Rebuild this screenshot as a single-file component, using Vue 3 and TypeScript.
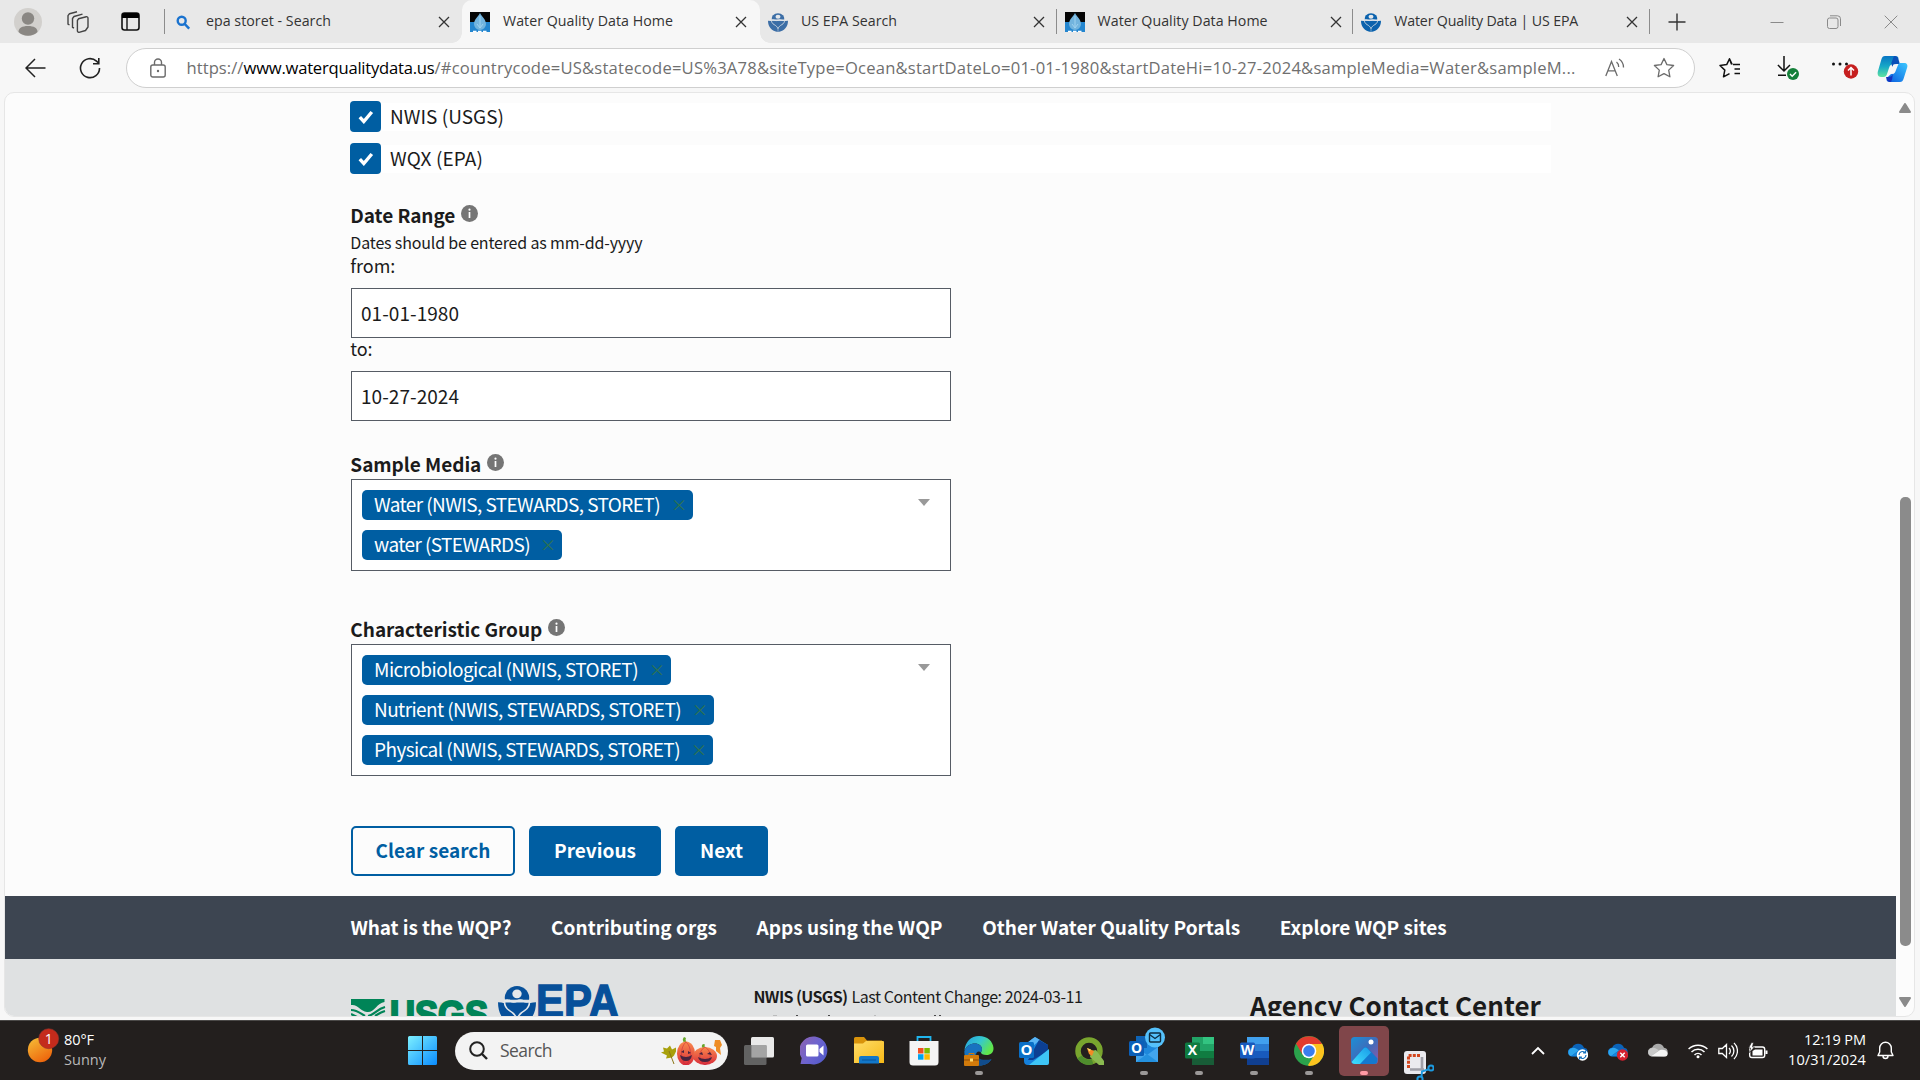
<script setup lang="ts">
interface Tab {
  title: string
  icon: 'search' | 'drop' | 'epa'
  width: number
  active?: boolean
  divider?: boolean
  muted?: boolean
}

interface Chip {
  label: string
  width: number
  total: number
}

const tabs: Tab[] = [
  { title: 'epa storet - Search', icon: 'search', width: 125 },
  { title: 'Water Quality Data Home', icon: 'drop', width: 170, active: true },
  { title: 'US EPA Search', icon: 'epa', width: 96, divider: true, muted: true },
  { title: 'Water Quality Data Home', icon: 'drop', width: 170, divider: true },
  { title: 'Water Quality Data | US EPA', icon: 'epa', width: 184, divider: true },
]

const sources = [
  { label: 'NWIS (USGS)', width: 114 },
  { label: 'WQX (EPA)', width: 93 },
]

const media: Chip[] = [
  { label: 'Water (NWIS, STEWARDS, STORET)', width: 286, total: 331 },
  { label: 'water (STEWARDS)', width: 156, total: 200 },
]

const groups: Chip[] = [
  { label: 'Microbiological (NWIS, STORET)', width: 264, total: 309 },
  { label: 'Nutrient (NWIS, STEWARDS, STORET)', width: 307, total: 352 },
  { label: 'Physical (NWIS, STEWARDS, STORET)', width: 306, total: 351 },
]

const links = [
  { label: 'What is the WQP?', width: 161 },
  { label: 'Contributing orgs', width: 166 },
  { label: 'Apps using the WQP', width: 186 },
  { label: 'Other Water Quality Portals', width: 258 },
  { label: 'Explore WQP sites', width: 167 },
]

// Tracks a label out (or in) so that it fills the given width.
const vFit = {
  mounted(el: HTMLElement, binding: { value: number }) {
    const count = (el.textContent ?? '').trim().length
    const natural = el.getBoundingClientRect().width
    if (count > 0) el.style.letterSpacing = `${((binding.value - natural) / count).toFixed(3)}px`
  },
}
</script>

<template>
  <div class="screen">
    <svg class="defs" width="0" height="0" aria-hidden="true">
      <defs>
        <symbol id="epa" viewBox="0 0 38 46">
          <path d="M0 20c8 0 14 4 19 12 5-8 11-12 19-12 0 14-7 24-19 26C7 44 0 34 0 20z" />
          <path d="M6.500 19.500h25c0 4-2 7.500-5 9.500-3.500 2-6 5-7.500 9-1.500-4-4-7-7.500-9-3-2-5-5.500-5-9.500z" stroke="#e4e7ea" stroke-width="1.600" />
          <path d="M7 17.500a12.200 12.500 0 1 1 24 0z" />
          <circle cx="19" cy="11" r="4.700" fill="#e4e7ea" />
          <path d="M6 18.800q3.200-2 6.500 0t6.500 0 6.500 0 6.500 0" fill="none" stroke="#e4e7ea" stroke-width="1.800" />
          <path d="M19 36v10" stroke="#e4e7ea" stroke-width="1" />
        </symbol>
        <symbol id="star" viewBox="0 0 22 22">
          <path d="M11 1.500l2.900 6.100 6.700.9-4.900 4.600 1.200 6.700-5.900-3.200-5.900 3.200 1.200-6.700L1.400 8.500l6.700-.9z" fill="none" stroke="currentColor" stroke-width="1.300" stroke-linejoin="round" />
        </symbol>
        <symbol id="info" viewBox="0 0 17 17">
          <circle cx="8.500" cy="8.500" r="8.500" fill="#757575" />
          <circle cx="8.500" cy="4.700" r="1.100" fill="#fff" />
          <path d="M8.500 7v6" stroke="#fff" stroke-width="1.700" />
        </symbol>
        <linearGradient id="gSun" x1="0" y1="0" x2=".6" y2="1"><stop offset="0" stop-color="#f6c038" /><stop offset="1" stop-color="#ee670d" /></linearGradient>
        <linearGradient id="gWin" x1="0" y1="0" x2="1" y2="1"><stop offset="0" stop-color="#7df0ff" /><stop offset="1" stop-color="#0a8cff" /></linearGradient>
        <linearGradient id="gChat" x1="0" y1=".2" x2="1" y2=".8"><stop offset="0" stop-color="#8a62b4" /><stop offset=".5" stop-color="#6c63cf" /><stop offset="1" stop-color="#5159c9" /></linearGradient>
        <linearGradient id="gFold" x1="0" y1="0" x2="1" y2="1"><stop offset="0" stop-color="#ffdc68" /><stop offset="1" stop-color="#f7b917" /></linearGradient>
        <linearGradient id="gEdge" x1="0" y1="0" x2="1" y2=".5"><stop offset="0" stop-color="#259fe0" /><stop offset=".55" stop-color="#35c8cf" /><stop offset="1" stop-color="#61e64a" /></linearGradient>
        <linearGradient id="gPhoto" x1="0" y1="0" x2="1" y2="1"><stop offset="0" stop-color="#1c8fd6" /><stop offset=".5" stop-color="#3d6dbb" /><stop offset="1" stop-color="#9257a6" /></linearGradient>
        <linearGradient id="gHill" x1="0" y1="1" x2="1" y2="0"><stop offset="0" stop-color="#3fe0fd" /><stop offset="1" stop-color="#199ae8" /></linearGradient>
        <linearGradient id="gCop1" x1="0" y1="0" x2="0" y2="1"><stop offset="0" stop-color="#0875c4" /><stop offset=".5" stop-color="#17a9c7" /><stop offset="1" stop-color="#5fe2a0" /></linearGradient>
        <linearGradient id="gCop2" x1="1" y1="0" x2="0" y2="1"><stop offset="0" stop-color="#3cc8ff" /><stop offset="1" stop-color="#0759dd" /></linearGradient>
        <linearGradient id="gPump" x1="0" y1="0" x2="0" y2="1"><stop offset="0" stop-color="#f98a4c" /><stop offset="1" stop-color="#d92d3b" /></linearGradient>
      </defs>
    </svg>

    <header class="tabstrip">
      <div class="corner">
        <svg width="28" height="28" viewBox="0 0 28 28">
          <circle cx="14" cy="14" r="14" fill="#d2d0cd" />
          <circle cx="14" cy="10.500" r="6.200" fill="#8a8783" />
          <path d="M4.500 24c0-4 3.500-6 9.500-6s9.500 2 9.500 6a14 14 0 0 1-19 0z" fill="#8a8783" />
        </svg>
        <svg class="workspaces" width="22" height="22" viewBox="0 0 22 22" fill="none" stroke="#444" stroke-width="1.400" stroke-linejoin="round">
          <path d="M11.500 7.800l7.800-2.100a1.400 1.400 0 0 1 1.700 1.300v9l-2.500 3.500-6.500 1.800a1.400 1.400 0 0 1-1.600-1.300V9.500z" />
          <path d="M7 17l-1.500-.7V7.500l1.500-2 8.500-2.400" />
          <path d="M2.500 14L1 13.200V4.700l1.500-2L10 .8" />
        </svg>
        <svg class="actions" width="19" height="19" viewBox="0 0 19 19">
          <rect x="1" y="1" width="17" height="17" rx="2.500" fill="none" stroke="#111" stroke-width="1.600" />
          <path d="M1 3.500A2.500 2.500 0 0 1 3.500 1h12A2.500 2.500 0 0 1 18 3.500V6H1z" fill="#000" />
          <path d="M6 6v12" stroke="#111" stroke-width="1.400" />
        </svg>
      </div>
      <div v-for="(tab, i) in tabs" :key="i" class="tab" :class="{ active: tab.active, divided: tab.divider }">
        <span class="favicon">
          <svg v-if="tab.icon === 'search'" width="20" height="20" viewBox="0 0 20 20" fill="none" stroke="#1a73cf" stroke-width="2.400">
            <circle cx="8.700" cy="8.800" r="4" /><path d="M11.600 11.900l4.600 4.800" />
          </svg>
          <svg v-else-if="tab.icon === 'drop'" width="20" height="20" viewBox="0 0 20 20">
            <rect width="20" height="20" fill="#050505" /><rect y="10" width="20" height="10" fill="#2486cf" />
            <path d="M10 1c2 4 6 6.500 6 11a6 6 0 0 1-12 0C4 7.500 8 5 10 1z" fill="#72b4de" />
            <path d="M10 4v12M7 12l3 4 3-4" stroke="#9fd2ef" fill="none" />
            <path d="M3 19.500h3.500M8 19.500h3.500M13 19.500h3.500" stroke="#fff" stroke-width="1.500" />
          </svg>
          <svg v-else width="20" height="20" viewBox="0 0 38 46" preserveAspectRatio="none" :fill="tab.muted ? '#3c6ea6' : '#0b62ad'"><use href="#epa" width="38" height="46" /></svg>
        </span>
        <span class="title"><span v-fit="tab.width">{{ tab.title }}</span></span>
        <svg class="close" width="12" height="12" viewBox="0 0 12 12" stroke="#333" stroke-width="1.300"><path d="M1 1l10 10M11 1L1 11" /></svg>
      </div>
      <svg class="newtab" width="18" height="18" viewBox="0 0 18 18" stroke="#333" stroke-width="1.400"><path d="M9 .5v17M.5 9h17" /></svg>
      <div class="window-controls">
        <svg width="14" height="14" viewBox="0 0 14 14"><path d="M.5 7.500h13" stroke="#8a8a8a" /></svg>
        <svg width="14" height="14" viewBox="0 0 14 14" fill="none" stroke="#8a8a8a"><rect x=".5" y="3" width="10.500" height="10.500" rx="2" /><path d="M3 .8h7.500a3 3 0 0 1 3 3V11" /></svg>
        <svg width="14" height="14" viewBox="0 0 14 14" stroke="#8a8a8a"><path d="M.7.700l12.600 12.600M13.300.7L.7 13.300" /></svg>
      </div>
    </header>

    <div class="toolbar">
      <svg class="back" width="21" height="20" viewBox="0 0 21 20" fill="none" stroke="#222" stroke-width="1.500"><path d="M20.500 10H1.200M10 1L1 10l9 9" /></svg>
      <svg class="reload" width="22" height="22" viewBox="0 0 22 22" fill="none" stroke="#222" stroke-width="1.600"><path d="M20.500 11A9.500 9.500 0 1 1 17.500 4.200L19.500 6M19.800 1v5.800H14" /></svg>
      <div class="omnibox">
        <svg width="16" height="20" viewBox="0 0 16 20" fill="none" stroke="#6b6b6b" stroke-width="1.400"><rect x=".8" y="7" width="14.400" height="12" rx="2" /><path d="M4.500 7V4.500a3.500 3.500 0 0 1 7 0V7" /><circle cx="8" cy="13" r="1.200" fill="#6b6b6b" stroke="none" /></svg>
        <div class="url"><span v-fit="57">https://</span><b v-fit="191">www.waterqualitydata.us</b><span v-fit="1141">/#countrycode=US&amp;statecode=US%3A78&amp;siteType=Ocean&amp;startDateLo=01-01-1980&amp;startDateHi=10-27-2024&amp;sampleMedia=Water&amp;sampleM...</span></div>
        <svg class="aloud" width="20" height="20" viewBox="0 0 20 20" fill="none" stroke="#6b6b6b" stroke-width="1.300"><path d="M.8 18L6.500 3.500 12.300 18M3 12.800h7.200M11.500 4a6 6 0 0 1 2.200 5M14 1a10 10 0 0 1 4.500 8.500" /></svg>
        <svg class="star" width="22" height="22"><use href="#star" /></svg>
      </div>
      <svg class="favs" width="22" height="22" viewBox="0 0 22 22" fill="none" stroke="#111" stroke-width="1.500" stroke-linejoin="round"><path d="M14 7.500h7M15.500 12h5.500M15.500 16.500H21" /><path d="M12.500 7.300L10.500 1.800 7.700 7.600 1 8.500l4.800 4.600L4.500 19.800l6-3.200M10.500 1.800l2.700 5.700" /></svg>
      <svg class="download" width="22" height="26" viewBox="0 0 22 26"><path d="M7 1v15M.9 10L7 16l6-6M1 20.300h8" fill="none" stroke="#111" stroke-width="1.500" /><circle cx="16" cy="19" r="6" fill="#15803a" /><path d="M13 19l2.200 2.200 3.900-4" fill="none" stroke="#fff" stroke-width="1.400" /></svg>
      <svg class="more" width="28" height="26" viewBox="0 0 28 26"><g fill="#111"><circle cx="2.500" cy="9" r="1.500" /><circle cx="9" cy="9" r="1.500" /><circle cx="15.500" cy="9" r="1.500" /></g><circle cx="20" cy="16.500" r="7.200" fill="#c61f1f" /><path d="M20 20.500V13M17 15.500l3-3 3 3" fill="none" stroke="#fff" stroke-width="1.500" /></svg>
      <svg class="copilot" width="31" height="28" viewBox="0 0 31 28">
        <path d="M8 1h10c3 0 4 1.500 3.200 4L17 9c-3 0-4 1-5 4l-2 6c-.6 2-1.500 3-3.500 3H4C1 22 0 19 1 16L4.500 4C5.200 2 6 1 8 1z" fill="url(#gCop1)" />
        <path d="M17 1c3 0 4 1.500 5 5l.8 3h-3C17 9 16 10 15.200 12l-.9-4z" fill="#0b50b8" />
        <path d="M23 27H13c-3 0-4-1.500-3.200-4L14 19c3 0 4-1 5-4l2-5c.6-1.500 1.500-2 3.500-2H27c3 0 4 2 3 5l-3.500 11c-.7 2-1.500 3-3.500 3z" fill="url(#gCop2)" />
        <path d="M14 27c-3 0-4-1.500-5-5h2.500c2.500 0 3.500-1 4.300-3l-.6 5z" fill="#1632bd" />
        <path d="M16.500 9.500h3.800l-3.500 9h-4z" fill="#f7f7f7" />
      </svg>
    </div>

    <div class="panel">
      <div class="page">
        <form class="form">
          <div v-for="source in sources" :key="source.label" class="check">
            <span class="box"><svg width="16" height="14" viewBox="0 0 16 14"><path d="M1.800 7.200l4 4.300 8-9.500" fill="none" stroke="#fff" stroke-width="3.400" /></svg></span>
            <label><span v-fit="source.width">{{ source.label }}</span></label>
          </div>

          <div class="heading date"><span v-fit="105">Date Range</span><svg width="17" height="17"><use href="#info" /></svg></div>
          <div class="hint"><span v-fit="292">Dates should be entered as mm-dd-yyyy</span></div>
          <div class="minor first"><span v-fit="45">from:</span></div>
          <div class="input"><span v-fit="98">01-01-1980</span></div>
          <div class="minor"><span v-fit="22">to:</span></div>
          <div class="input"><span v-fit="98">10-27-2024</span></div>

          <div class="heading media"><span v-fit="131">Sample Media</span><svg width="17" height="17"><use href="#info" /></svg></div>
          <div class="select">
            <div class="chips">
              <div v-for="chip in media" :key="chip.label" class="chip" :style="{ width: chip.total + 'px' }">
                <span v-fit="chip.width">{{ chip.label }}</span><i>×</i>
              </div>
            </div>
            <b class="caret" />
          </div>

          <div class="heading group"><span v-fit="192">Characteristic Group</span><svg width="17" height="17"><use href="#info" /></svg></div>
          <div class="select">
            <div class="chips">
              <div v-for="chip in groups" :key="chip.label" class="chip" :style="{ width: chip.total + 'px' }">
                <span v-fit="chip.width">{{ chip.label }}</span><i>×</i>
              </div>
            </div>
            <b class="caret" />
          </div>

          <div class="buttons">
            <div class="btn outline"><span v-fit="115">Clear search</span></div>
            <div class="btn prev"><span v-fit="82">Previous</span></div>
            <div class="btn next"><span v-fit="43">Next</span></div>
          </div>
        </form>

        <nav class="links"><a v-for="link in links" :key="link.label" v-fit="link.width">{{ link.label }}</a></nav>

        <footer class="footer">
          <svg class="logos" width="270" height="57" viewBox="0 0 270 57">
            <g fill="none" stroke="#008457">
              <path d="M0 40h33.500v3C26 44 23 54 16 53S7 45 0 46z" fill="#008457" stroke="none" />
              <path d="M0 51c6 0 9 3 14 6M0 55l6 3M17 57c6-1 9-7 17-9M24 57c3-2 6-4 10-5" stroke-width="2.200" />
            </g>
            <text x="39" y="69" textLength="98" lengthAdjust="spacingAndGlyphs" font-size="39" fill="#008457" stroke="#008457" stroke-width="2.200">USGS</text>
            <svg x="147" y="24.500" width="38" height="43" viewBox="0 0 38 46" preserveAspectRatio="none" fill="#07509a"><use href="#epa" width="38" height="46" /></svg>
            <text x="185" y="58" textLength="83" lengthAdjust="spacingAndGlyphs" font-size="47" fill="#07509a" stroke="#07509a" stroke-width="1.400">EPA</text>
          </svg>
          <div class="changes">
            <p><b v-fit="94">NWIS (USGS)</b><span class="rest" v-fit="231">Last Content Change: 2024-03-11</span></p>
            <svg width="200" height="1" viewBox="0 0 200 1" fill="#4a4a4c"><path d="M18 0h4v1h-4zM119 0h2v1h-2z" opacity=".25" /><path d="M41 0h2v1h-2zM73 0h2v1h-2zM179 0h2v1h-2zM184 0h2v1h-2z" /></svg>
          </div>
          <div class="contact"><span v-fit="291">Agency Contact Center</span></div>
        </footer>
      </div>
      <div class="scrollbar">
        <svg width="12" height="10" viewBox="0 0 12 10"><path d="M6 1l5 8H1z" fill="#8b8b8b" stroke="#8b8b8b" stroke-linejoin="round" stroke-width="2" /></svg>
        <div class="thumb" />
        <svg width="12" height="10" viewBox="0 0 12 10"><path d="M6 9l5-8H1z" fill="#8b8b8b" stroke="#8b8b8b" stroke-linejoin="round" stroke-width="2" /></svg>
      </div>
    </div>

    <div class="taskbar">
      <div class="weather">
        <svg width="38" height="38" viewBox="0 0 38 38">
          <circle cx="14" cy="24" r="12.200" fill="url(#gSun)" /><circle cx="22.700" cy="12.700" r="10" fill="#c42b1c" stroke="#8e342c" stroke-width=".6" />
          <text x="22.700" y="18" text-anchor="middle" class="badge">1</text>
        </svg>
        <div><span v-fit="30">80°F</span><span class="dim" v-fit="42">Sunny</span></div>
      </div>
      <svg class="start" width="29" height="29" viewBox="0 0 29 29"><path d="M1.500 0H14v14H0V1.500A1.500 1.500 0 0 1 1.500 0zM15 0h12.500A1.500 1.500 0 0 1 29 1.500V14H15zM0 15h14v14H1.500A1.500 1.500 0 0 1 0 27.500zM15 15h14v12.500a1.500 1.500 0 0 1-1.500 1.500H15z" fill="url(#gWin)" /></svg>
      <div class="search">
        <svg width="19" height="19" viewBox="0 0 19 19" fill="none" stroke="#222" stroke-width="2"><circle cx="8" cy="8" r="6.800" /><path d="M13 13l5 5" stroke-width="2.400" /></svg>
        <span v-fit="52">Search</span>
        <svg class="pumpkins" width="62" height="28" viewBox="0 0 62 28">
          <path d="M13 25.500l-2-5-6 1 1-3-6-3 3-1-1-4 4 1 3-3 2 4 4-2v4l-2 4-2 2z" fill="#a8a00c" /><path d="M8 14l5 13" stroke="#8b7718" />
          <path d="M23 6c-1-3-2-3 0-6l2 1c-1 2 0 3 1 5zM42 12c-1-2-2-3 0-5l2 .5c-1 2 0 3 1 5z" fill="#68a62a" />
          <ellipse cx="25" cy="16.500" rx="9" ry="12" fill="url(#gPump)" /><ellipse cx="44" cy="19" rx="12" ry="9" fill="url(#gPump)" />
          <path d="M25 5c-6 5-6 18 0 23M25 5c6 5 6 18 0 23M44 10c-7 4-7 14 0 18M44 10c7 4 7 14 0 18" fill="none" stroke="#c5243e" opacity=".5" />
          <path d="M20 15l3-2v3zM27 14l3 2-3 1zM19 18q6 4 12 0-1 6-6 6t-6-6zM38 17l3-2 1 3zM46 17l3-2 2 3zM37 20q7 4 14 0-1 5-7 5t-7-5z" fill="#47233e" />
          <path d="M54 3l5 0 2 5-2 3 1 7-5-4v-4l-2-1z" fill="#ee8d25" />
        </svg>
      </div>
      <div class="apps">
        <div class="app"><svg width="30" height="28" viewBox="0 0 30 28"><rect x="7" width="23" height="20.500" rx="1.500" fill="#e9e9e9" /><rect y="8" width="22.500" height="20" rx="1.500" fill="#686868" opacity=".92" /><path d="M7.500 8h15v12.500h-15z" fill="#a4a4a4" /></svg></div>
        <div class="app"><svg width="29" height="29" viewBox="0 0 29 29"><path d="M15 .5A14 14 0 1 1 10 28H.5l1.200-6A14 14 0 0 1 15 .5z" fill="url(#gChat)" /><rect x="6" y="8.500" width="12.500" height="12" rx="1.500" fill="#fff" /><path d="M19.500 13l4-3.500v10l-4-3.500z" fill="#fff" /></svg></div>
        <div class="app"><svg width="30" height="27" viewBox="0 0 30 27"><path d="M0 1.500A1.500 1.500 0 0 1 1.500 0H10l3 3.500h15V10H0z" fill="#d9930b" /><path d="M0 6.500h9L12 4h17a1 1 0 0 1 1 1v21H0z" fill="url(#gFold)" /><path d="M5 26.500V21a2 2 0 0 1 2-2h16a2 2 0 0 1 2 2v5.500z" fill="#1277c9" /><path d="M8 23h14" stroke="#07559b" /></svg></div>
        <div class="app"><svg width="30" height="30" viewBox="0 0 30 30"><path d="M8.500 6V1h13v5" fill="none" stroke="#20b5ee" stroke-width="1.800" /><path d="M.5 5h29v21a3.500 3.500 0 0 1-3.500 3.500H4A3.500 3.500 0 0 1 .5 26z" fill="#f4f4f4" /><path d="M9 12h5.500v5.500H9z" fill="#f25022" /><path d="M15.300 12h5.500v5.500h-5.500z" fill="#7fba00" /><path d="M9 18.200h5.500v5.500H9z" fill="#00a4ef" /><path d="M15.300 18.200h5.500v5.500h-5.500z" fill="#ffb900" /></svg></div>
        <div class="app running"><svg width="30" height="31" viewBox="0 0 30 31">
          <path d="M15 1C23.500 1 29 6.500 29.500 13c.3 4.500-3 7-7 7-3.500 0-5.500-1-5.500-2.500 0-1 1-1.500 1-3.500 0-3-3-5.500-7-5.500C6.500 8.500 2.500 11 .5 15.500 1 7 7 1 15 1z" fill="url(#gEdge)" />
          <path d="M.3 16.500C2 11 6 8.500 11 8.500c4 0 7 2.500 7 5.500 0 2-1 2.500-1 3.500-2-2-5-1-5 2.500 0 4 5 6.500 10 6 2.500-.2 4-1 5.500-1.800C25 28 21 30.500 15.500 30.500 7 30.500 0 25 .3 16.500z" fill="#1873c0" />
          <path d="M12 18.500c0 5 6 7.700 15.500 5.700C25 28.500 20 31 14 30.300c-4-2-5-8-2-11.800z" fill="#114c8c" />
          <rect y="20" width="15" height="11" rx="1" fill="#d17a0b" /><path d="M0 25h15" stroke="#8d4d08" /><rect x="6" y="23.500" width="3" height="3" fill="#ffdb70" /><path d="M5 20v-1.500h5V20" fill="none" stroke="#d17a0b" /></svg></div>
        <div class="app"><svg width="30" height="28" viewBox="0 0 30 28"><path d="M5 8L16 0l13 8v18a2 2 0 0 1-2 2H9a4 4 0 0 1-4-4z" fill="#1580dc" /><path d="M13 2l3-2 5 3-14 12V7z" fill="#58b4f4" /><path d="M20 3l9 5v6L14 23H9z" fill="#0c3f93" /><path d="M30 12v14a2 2 0 0 1-2 2H10z" fill="#3ec5f6" /><rect y="5" width="15" height="16" rx="1.500" fill="#0a6fc7" /><text x="7.500" y="18" text-anchor="middle" class="letter">O</text></svg></div>
        <div class="app"><svg width="29" height="28" viewBox="0 0 29 28"><circle cx="14" cy="14" r="11" fill="none" stroke="#79a52e" stroke-width="5.500" /><path d="M4.500 20a11 11 0 0 0 13 4.500" fill="none" stroke="#4f8d2d" stroke-width="5.500" /><path d="M16 14l5-1 8 11v4h-5l-9-8z" fill="#8aba50" /><path d="M12 11l7 3-2 5-3-2z" fill="#f28a25" /><path d="M12 11l4 1.500-1.500 2z" fill="#ffdf6b" /></svg></div>
        <div class="app running"><svg class="wide" width="37" height="38" viewBox="0 0 37 38"><rect x="7" y="9" width="22" height="24" fill="#1e88dc" /><path d="M7 9h11v12H7z" fill="#0e63b5" /><path d="M7 20l11 8 11-8v15H7z" fill="#42a5ee" /><path d="M7 35l11-8 11 8z" fill="#2491df" /><rect y="14" width="15" height="15" rx="1.500" fill="#0b5fb8" /><text x="7.500" y="26" text-anchor="middle" class="letter small">O</text><circle cx="26" cy="10.500" r="10" fill="#55c1fb" /><rect x="20.500" y="6" width="11" height="9" rx="1" fill="none" stroke="#0d2d42" stroke-width="1.400" /><path d="M20.500 7.500l5.500 4 5.500-4" fill="none" stroke="#0d2d42" stroke-width="1.400" /></svg></div>
        <div class="app running"><svg width="29" height="28" viewBox="0 0 29 28"><path d="M7 0h22v28H7z" fill="#21a366" /><path d="M18 0h11v7H18z" fill="#33c481" /><path d="M18 14h11v7H18zM7 14h11v7H7z" fill="#107c41" /><path d="M7 21h22v7H7z" fill="#185c37" /><rect y="5.500" width="15" height="16" rx="1.500" fill="#0f7a40" /><text x="7.500" y="18" text-anchor="middle" class="letter small">X</text></svg></div>
        <div class="app running"><svg width="29" height="28" viewBox="0 0 29 28"><path d="M7 0h22v7H7z" fill="#41a0ee" /><path d="M7 7h22v7H7z" fill="#2b7cd3" /><path d="M7 14h22v7H7z" fill="#185abd" /><path d="M7 21h22v7H7z" fill="#103f91" /><rect y="5.500" width="15" height="16" rx="1.500" fill="#185abd" /><text x="7.500" y="18" text-anchor="middle" class="letter small">W</text></svg></div>
        <div class="app running"><svg width="30" height="30" viewBox="0 0 30 30"><circle cx="15" cy="15" r="15" fill="#2ba24c" /><path d="M28 7.500A15 15 0 0 1 15 30l-1-1 7-11-6-10.500z" fill="#fcc31e" /><path d="M2 7.500L8.500 18.800 15 8h13A15 15 0 0 0 2 7.500z" fill="#e33b2e" /><circle cx="15" cy="15" r="7.300" fill="#fff" /><circle cx="15" cy="15" r="5.800" fill="#3b7ded" /></svg></div>
        <div class="app running current"><svg width="27" height="27" viewBox="0 0 27 27"><rect width="27" height="27" rx="3.500" fill="url(#gPhoto)" /><path d="M1 25L12.500 11a2.500 2.500 0 0 1 4 0l10 10.500v2A3.500 3.500 0 0 1 23 27H4a4 4 0 0 1-3-2z" fill="#1479cf" /><path d="M.5 25L12.500 11.500a2.500 2.500 0 0 1 4 0l3.500 4L9 27H4a4 4 0 0 1-3.500-2z" fill="url(#gHill)" /><circle cx="20" cy="5" r="2.500" fill="#fff" /></svg></div>
        <div class="app snip"><svg width="30" height="30" viewBox="0 0 30 30"><rect width="22" height="23" rx="3" fill="#eaeaef" /><path d="M4.500 17V4.500H17" fill="none" stroke="#d3471f" stroke-width="3" stroke-dasharray="3 1.200" /><path d="M6 18.500h14M18 6v13" stroke="#9f9fa8" stroke-width="2.600" /><g fill="none" stroke="#1c9ae0" stroke-width="2"><circle cx="27" cy="17" r="2.600" /><circle cx="16" cy="28" r="2.600" /><path d="M24 18.500l-6 2-.5 5.500" /></g></svg></div>
      </div>
      <div class="tray">
        <svg class="chev" width="14" height="9" viewBox="0 0 14 9" fill="none" stroke="#fff" stroke-width="1.800"><path d="M1 8l6-6 6 6" /></svg>
        <svg v-for="n in 3" :key="n" class="cloud" width="20" height="18" viewBox="0 0 20 18">
          <path d="M4.500 13.500a4.500 4.500 0 0 1-.3-9A6.500 6.500 0 0 1 16 4.800a4.400 4.400 0 0 1 0 8.700z" :fill="n === 3 ? '#a9a9a9' : '#0b63b8'" />
          <path d="M1 12c-2-4 1-7 4-7.200 3 0 4 1.500 6 2.500L3 13.200z" :fill="n === 3 ? '#c9c9c9' : '#2da5ed'" />
          <path d="M3 13.300L12 7c3-1 7 0 7.500 3s-1.500 3.500-3.500 3.500z" :fill="n === 3 ? '#f4f4f4' : '#1687dd'" />
          <template v-if="n === 1"><circle cx="14.500" cy="12" r="5.700" fill="#fff" /><path d="M11 12a3.500 3.500 0 0 1 6-2.400M18 12a3.500 3.500 0 0 1-6 2.400M17.500 7.500v2.400h-2.400M11.500 16.500v-2.400h2.400" fill="none" stroke="#1471bd" stroke-width="1.200" /></template>
          <template v-if="n === 2"><circle cx="14.500" cy="12" r="5.700" fill="#d5202e" /><path d="M12.300 9.800l4.400 4.400M16.700 9.800l-4.400 4.400" stroke="#fff" stroke-width="1.400" /></template>
        </svg>
        <svg class="wifi" width="20" height="16" viewBox="0 0 20 16" fill="none" stroke="#fff" stroke-width="1.500"><path d="M.6 6a13.500 13.500 0 0 1 18.800 0M3.500 9a9.300 9.300 0 0 1 13 0M6.500 12a5 5 0 0 1 7 0" /><circle cx="10" cy="13.800" r="1.500" fill="#fff" stroke="none" /></svg>
        <svg class="speaker" width="20" height="18" viewBox="0 0 20 18" fill="none" stroke="#fff" stroke-width="1.300"><path d="M.8 6.500h3.500l4.200-4v13l-4.200-4H.8zM11 6a4 4 0 0 1 0 6M13.500 3.500a7.500 7.500 0 0 1 0 11M16 1a11 11 0 0 1 0 16" /></svg>
        <svg class="battery" width="20" height="18" viewBox="0 0 20 18"><rect x="1.700" y="5" width="15" height="10.500" rx="2.200" fill="none" stroke="#fff" stroke-width="1.400" /><path d="M4.500 13.500V9L7 7.500h7.500v6zM17.500 8.500h2V12h-2z" fill="#fff" /><path d="M3.500.5L.5 6h2l-1 4.500L6.500 5h-2l1-4.500z" fill="#fff" stroke="#211e1d" stroke-width=".7" /></svg>
        <div class="clock"><span v-fit="62">12:19 PM</span><span v-fit="78">10/31/2024</span></div>
        <svg class="bell" width="17" height="19" viewBox="0 0 17 19" fill="none" stroke="#fff" stroke-width="1.400" stroke-linejoin="round"><path d="M1 14.500h15l-1.700-3.500V7a5.800 5.800 0 0 0-11.600 0v4zM6 15a2.500 2.500 0 0 0 5 0" /></svg>
      </div>
    </div>
  </div>
</template>

<style>
html,
body {
  margin: 0;
  overflow: hidden;
}
</style>

<style scoped>
.screen {
  width: 1920px;
  height: 1080px;
  display: flex;
  flex-direction: column;
  background: #f7f7f7;
  font-family: 'Open Sans', 'Noto Sans', sans-serif;
  color: #1b1b1b;
  overflow: hidden;
}
.screen * { box-sizing: border-box; }
svg { display: block; flex: none; }
.defs { position: absolute; }
span, a, b { white-space: nowrap; }

.tabstrip { height: 43px; flex: none; display: flex; align-items: center; background: #e8e8e8; }
.corner { width: 166px; height: 25px; display: flex; align-items: center; padding-left: 14px; flex: none; background: linear-gradient(#8c8c8c, #8c8c8c) 164px 0 / 1px 25px no-repeat; }
.workspaces { margin-left: 24.500px; }
.actions { margin-left: 32px; }
.tab { width: 296.600px; height: 43px; flex: none; display: flex; align-items: center; position: relative; padding-left: 8px; }
.tab:nth-child(2) { width: 296px; padding-left: 7px; }
.tab.active { width: 298px; background: #f7f7f7; border-radius: 10px 10px 0 0; }
.tab.active::before, .tab.active::after { content: ''; position: absolute; bottom: 0; width: 10px; height: 10px; }
.tab.active::before { left: -10px; background: radial-gradient(circle at 0 0, #e8e8e8 9.500px, #f7f7f7 10px); }
.tab.active::after { right: -10px; background: radial-gradient(circle at 100% 0, #e8e8e8 9.500px, #f7f7f7 10px); }
.tab.divided { background: linear-gradient(#8c8c8c, #8c8c8c) 100% 9px / 1px 25px no-repeat; }
.favicon { width: 33px; }
.title { width: 232px; font-size: 14.200px; line-height: 20px; color: #333; padding-bottom: 1px; }
.title span { display: inline-block; }
.close { margin-top: 1px; }
.newtab { margin-left: 18px; }
.window-controls { margin-left: auto; margin-right: 22px; display: flex; gap: 43px; }

.toolbar { height: 49px; flex: none; display: flex; align-items: center; padding-bottom: 0; }
.back { margin-left: 24.500px; }
.reload { margin-left: 33.500px; }
.omnibox { margin-left: 24.500px; width: 1569px; height: 40px; border: 1px solid #cfcfcf; border-radius: 20px; background: #fff; display: flex; align-items: center; padding-left: 23px; }
.url { margin-left: 21px; width: 1418px; font-size: 16.600px; line-height: 24px; display: flex; color: #6f6f6f; flex: none; }
.url b { font-weight: 400; color: #000; }
.star { margin-left: 28px; color: #6b6b6b; }
.favs { margin-left: 24px; }
.download { margin-left: 36px; }
.more { margin-left: 32px; }
.copilot { margin-left: 18px; margin-top: 2px; }

.panel { margin: 0 5px 0 4px; height: 925px; flex: none; display: flex; border: 1px solid #e6e6e6; border-radius: 10px; background: #fcfcfc; overflow: hidden; font-family: 'Noto Sans CJK SC', 'Noto Sans', sans-serif; }
.page { width: 1891px; flex: none; display: flex; flex-direction: column; }
.form { height: 803px; flex: none; margin: 0 0 0 346px; padding-top: 8px; font-size: 19px; }
.form span { display: inline-block; }
.check { display: flex; align-items: center; width: 1201px; height: 31px; margin: 0 0 11px -1px; }
.form .check .box { width: 31px; height: 31px; border-radius: 4px; background: #005ea2; display: flex; align-items: center; justify-content: center; z-index: 1; }
.check label { flex: 1; background: #fff; height: 28px; line-height: 26px; padding-left: 9px; }
.heading { height: 24px; line-height: 24px; font-weight: 700; display: flex; margin-left: -.7px; }
.heading svg { margin: 1.500px 0 0 6px; }
.heading.date { margin-top: 18px; padding-top: 0; }
.check + .heading.date { margin-top: 29px; }
.date + .hint { margin-top: 3px; }
.hint { font-size: 16px; height: 24px; line-height: 24px; margin-left: -.7px; }
.minor { height: 22px; line-height: 21px; font-size: 18px; margin-left: -.7px; }
.minor.first { margin-top: 1px; }
.input { margin-top: 11px; width: 600px; height: 50px; border: 1px solid #565c65; background: #fff; line-height: 48px; padding-left: 9px; }
.heading.media { margin-top: 31px; }
.heading.group { margin-top: 46px; }
.select { margin-top: 3px; width: 600px; border: 1px solid #565c65; background: #fff; padding: 10px 20px 10px 10px; display: flex; justify-content: space-between; }
.chips { display: flex; flex-direction: column; gap: 10px; }
.chip { height: 30px; border-radius: 5px; background: #005ea2; color: #fff; line-height: 28px; padding: 0 6px 0 12px; display: flex; justify-content: space-between; }
.chip i { font-style: normal; font-size: 16px; line-height: 29px; color: #2e7350; }
.caret { width: 0; height: 0; margin-top: 9px; border: 6px solid transparent; border-top: 7px solid #999; border-bottom: 0; }
.buttons { margin-top: 50px; display: flex; gap: 14px; }
.btn { height: 50px; border-radius: 5px; background: #005ea2; color: #fff; font-weight: 700; line-height: 48px; text-align: center; }
.btn.outline { width: 164px; background: #fcfcfc; color: #005ea2; border: 2.500px solid #005ea2; line-height: 44px; }
.btn.prev { width: 132px; }
.btn.next { width: 93px; }
.links { height: 63px; flex: none; background: #3d4551; color: #fff; font-weight: 700; font-size: 19px; line-height: 61px; display: flex; gap: 39.600px; padding-left: 345.400px; }
.footer { height: 58px; flex: none; background: #dfe1e2; display: flex; overflow: hidden; }
.logos { margin-left: 346px; font-family: 'Liberation Sans', sans-serif; font-weight: 700; }
.changes { width: 496px; flex: none; padding-left: 132.500px; font-size: 16px; }
.changes p { margin: 24.500px 0 0; line-height: 24px; display: flex; }
.changes .rest { margin-left: 4px; }
.changes svg { margin: 7.500px 0 0 1.500px; }
.contact { margin-left: 133px; font-size: 26px; font-weight: 700; line-height: 38px; padding-top: 26.500px; }
.scrollbar { width: 18px; display: flex; flex-direction: column; align-items: center; padding: 10px 0 9px; }
.thumb { width: 11px; height: 449px; margin: 384px 0 auto; border-radius: 5px; background: #8b8b8b; }

.taskbar { margin-top: 3px; height: 60px; flex: none; background: #231f1e; border-top: 1px solid #4b4948; color: #fff; display: flex; align-items: center; font-size: 14.500px; }
.weather { width: 408px; display: flex; align-items: center; padding-left: 26px; flex: none; }
.weather > div, .clock { display: flex; flex-direction: column; align-items: flex-start; line-height: 20px; padding-bottom: 2px; }
.weather svg { margin-top: -11px; }
.weather .dim { color: #b9b9b9; }
.badge { font-size: 14px; fill: #fff; }
.search { margin-left: 18px; width: 273px; height: 38px; border-radius: 19px; background: #f3f3f3; display: flex; align-items: center; padding-left: 14px; color: #555; font-size: 17.500px; flex: none; }
.search span { margin: -2px 0 0 12px; }
.pumpkins { margin-left: 109px; }
.apps { margin-left: 3.500px; display: flex; flex: none; }
.app { width: 55px; height: 50px; display: flex; align-items: center; justify-content: center; position: relative; }
.app.running::after { content: ''; position: absolute; left: 23.500px; bottom: 1px; width: 8px; height: 4px; border-radius: 2px; background: #9b9898; }
.app.current { background: #80464a; border-radius: 5px; width: 50px; margin: 0 2.500px; }
.app.current::after { left: 21px; background: #ff9aa4; }
.app .wide { margin: -9px -7px 0 0; }
.app.snip svg { margin-top: 31px; }
.letter { font-weight: 700; font-size: 15px; fill: #fff; }
.letter.small { font-size: 14px; }
.tray { margin-left: 84.500px; display: flex; align-items: center; }
.chev { margin-right: 23px; }
.cloud { margin: 3px 20px 0 0; }
.speaker, .battery { margin-left: 10px; }
.clock { align-items: flex-end; margin-left: 20px; width: 78px; }
.bell { margin-left: 11px; }
</style>
